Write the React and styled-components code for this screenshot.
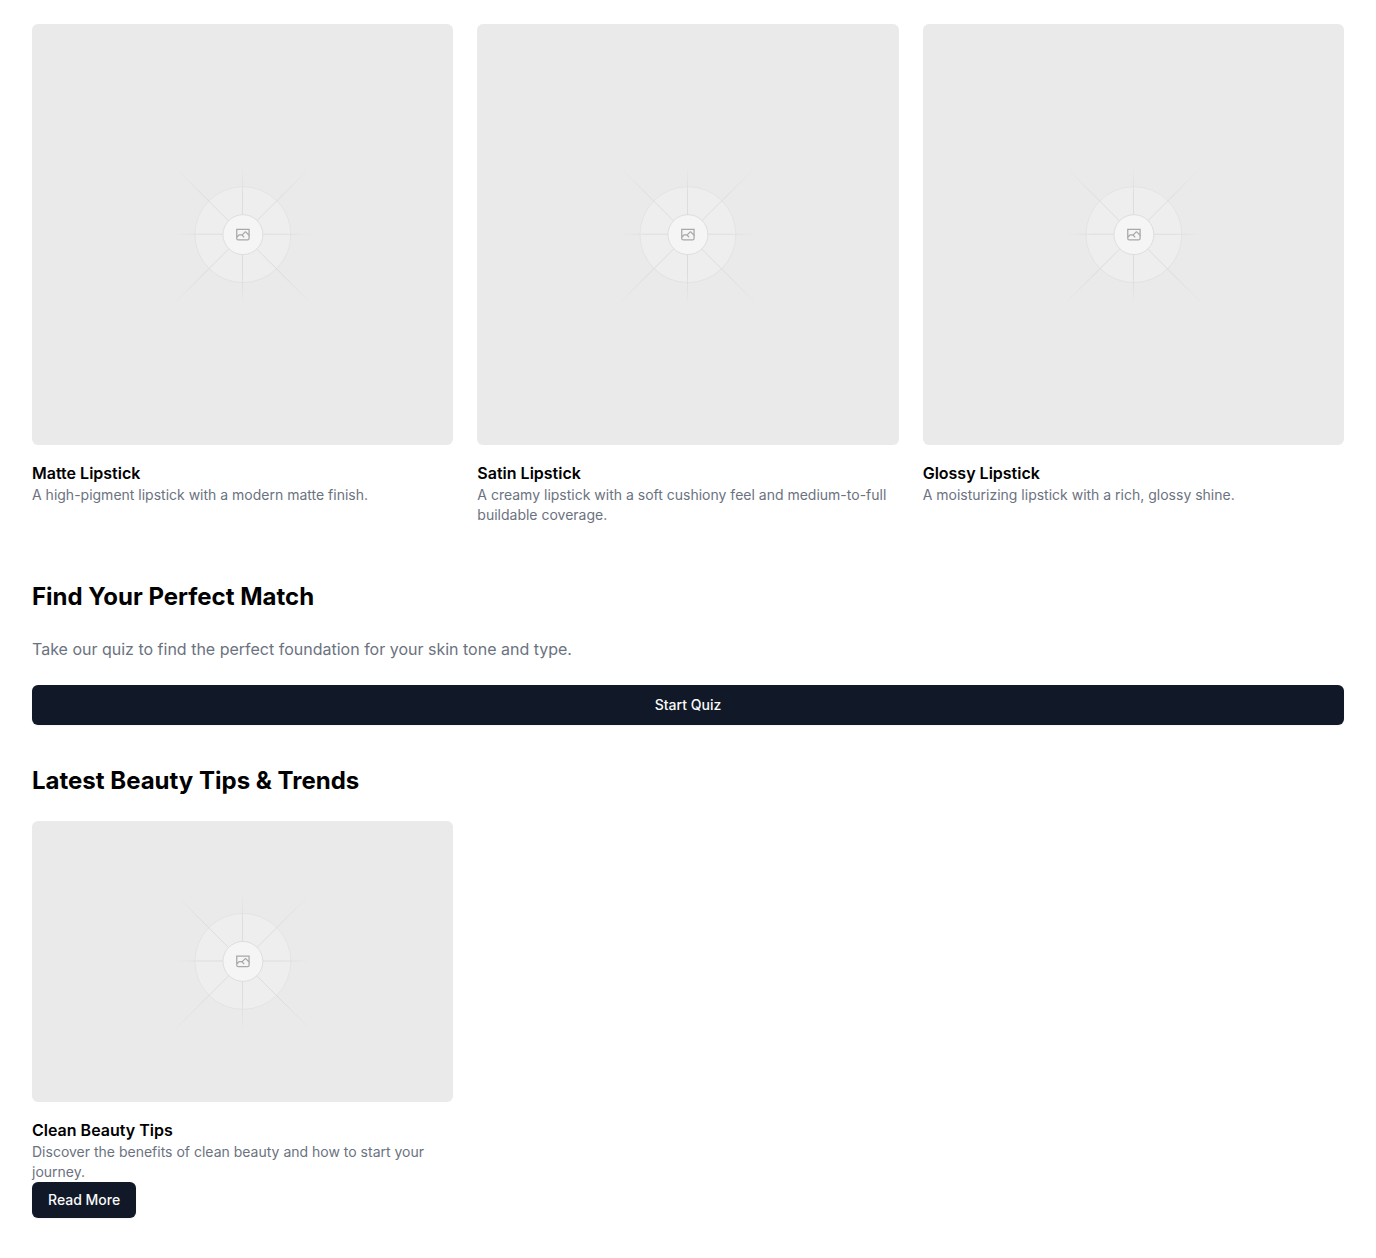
import React, { useId } from "react";
import styled, { createGlobalStyle } from "styled-components";

const GlobalStyle = createGlobalStyle`
  *, *::before, *::after { box-sizing: border-box; }
  body {
    margin: 0;
    background: #ffffff;
    color: #000000;
    font-family: Inter, "Liberation Sans", sans-serif;
    font-size: 16px;
    line-height: 24px;
  }
`;

const Page = styled.main`
  display: flex;
  flex-direction: column;
  gap: 40px;
  padding: 24px 32px;
`;

const Section = styled.section`
  display: flex;
  flex-direction: column;
  gap: 24px;
`;

const CardGrid = styled.div`
  display: grid;
  grid-template-columns: repeat(3, minmax(0, 1fr));
  gap: 24px;
`;

const Card = styled.article`
  display: flex;
  flex-direction: column;
  align-items: flex-start;
  padding-bottom: 16px;
`;

const Picture = styled.svg`
  display: block;
  width: 100%;
  aspect-ratio: ${(p) => p.$ratio};
  margin-bottom: 16px;
  border-radius: 6px;
  background: #eaeaea;
`;

const SectionTitle = styled.h2`
  margin: 0;
  font-size: 24px;
  line-height: 32px;
  font-weight: 700;
`;

const CardTitle = styled.h3`
  margin: 0;
  font-size: 16px;
  line-height: 24px;
  font-weight: 600;
`;

const Text = styled.p`
  margin: 0;
  color: #6b7280;
  font-size: ${(p) => (p.$small ? "14px" : "16px")};
  line-height: ${(p) => (p.$small ? "20px" : "24px")};
`;

const Button = styled.button`
  width: ${(p) => (p.$wide ? "100%" : "auto")};
  height: ${(p) => (p.$wide ? "40px" : "36px")};
  padding: 0 16px;
  border: 0;
  border-radius: 6px;
  background: #111827;
  color: #f9fafb;
  font-family: inherit;
  font-size: 14px;
  line-height: 20px;
  font-weight: 500;
  box-shadow: 0 1px 2px rgba(0, 0, 0, 0.05);
  cursor: pointer;
  &:hover { background: #1f2937; }
`;

const spokes = [
  [404.3, 796.6, 795.7, 405.2],
  [404.8, 598.7, 796.6, 598.8],
  [599.5, 795.7, 599.6, 404],
  [795.7, 796.6, 404.3, 405.2],
];

function Placeholder({ ratio, label }) {
  const id = useId();
  return (
    <Picture
      $ratio={ratio}
      viewBox="0 0 1200 1200"
      preserveAspectRatio="xMidYMid slice"
      fill="none"
      role="img"
      aria-label={label}
    >
      <defs>
        {spokes.map(([x1, y1, x2, y2], i) => (
          <linearGradient
            key={i}
            id={`${id}-${i}`}
            gradientUnits="userSpaceOnUse"
            x1={x1}
            y1={y1}
            x2={x2}
            y2={y2}
          >
            <stop stopColor="#c9c9c9" stopOpacity="0" />
            <stop offset="0.208" stopColor="#c9c9c9" />
            <stop offset="0.792" stopColor="#c9c9c9" />
            <stop offset="1" stopColor="#c9c9c9" stopOpacity="0" />
          </linearGradient>
        ))}
      </defs>
      <g opacity="0.5" strokeWidth="2.418">
        <circle cx="600.7" cy="599.9" r="136.6" fill="#fafafa" stroke="#c9c9c9" opacity="0.5" />
        {spokes.map(([x1, y1, x2, y2], i) => (
          <path key={i} d={`M${x1} ${y1}L${x2} ${y2}`} stroke={`url(#${id}-${i})`} />
        ))}
        <circle cx="600.7" cy="599.9" r="56.8" fill="#ffffff" />
        <path
          fill="#666666"
          fillRule="evenodd"
          clipRule="evenodd"
          d="M616.426 586.58h-31.434v16.176l3.553-3.554.531-.531h9.068l.074-.074 8.463-8.463h2.565l7.18 7.181V586.58Zm-15.715 14.654 3.698 3.699 1.283 1.282-2.565 2.565-1.282-1.283-5.2-5.199h-6.066l-5.514 5.514-.073.073v2.876a2.418 2.418 0 0 0 2.418 2.418h26.598a2.418 2.418 0 0 0 2.418-2.418v-8.317l-8.463-8.463-7.181 7.181-.071.072Zm-19.347 5.442v4.085a6.045 6.045 0 0 0 6.046 6.045h26.598a6.044 6.044 0 0 0 6.045-6.045v-7.108l1.356-1.355-1.282-1.283-.074-.073v-17.989h-38.689v23.43l-.146.146.146.147Z"
        />
        <circle cx="600.7" cy="599.9" r="56.8" stroke="#c9c9c9" />
      </g>
    </Picture>
  );
}

const products = [
  { name: "Matte Lipstick", text: "A high-pigment lipstick with a modern matte finish." },
  {
    name: "Satin Lipstick",
    text: "A creamy lipstick with a soft cushiony feel and medium-to-full buildable coverage.",
  },
  { name: "Glossy Lipstick", text: "A moisturizing lipstick with a rich, glossy shine." },
];

export default function App() {
  return (
    <>
      <GlobalStyle />
      <Page>
        <CardGrid>
          {products.map((product) => (
            <Card key={product.name}>
              <Placeholder ratio="1 / 1" label={product.name} />
              <CardTitle>{product.name}</CardTitle>
              <Text $small>{product.text}</Text>
            </Card>
          ))}
        </CardGrid>
        <Section>
          <SectionTitle>Find Your Perfect Match</SectionTitle>
          <Text>Take our quiz to find the perfect foundation for your skin tone and type.</Text>
          <Button type="button" $wide>Start Quiz</Button>
        </Section>
        <Section>
          <SectionTitle>Latest Beauty Tips &amp; Trends</SectionTitle>
          <CardGrid>
            <Card>
              <Placeholder ratio="3 / 2" label="Clean Beauty Tips" />
              <CardTitle>Clean Beauty Tips</CardTitle>
              <Text $small>
                Discover the benefits of clean beauty and how to start your journey.
              </Text>
              <Button type="button">Read More</Button>
            </Card>
          </CardGrid>
        </Section>
      </Page>
    </>
  );
}
